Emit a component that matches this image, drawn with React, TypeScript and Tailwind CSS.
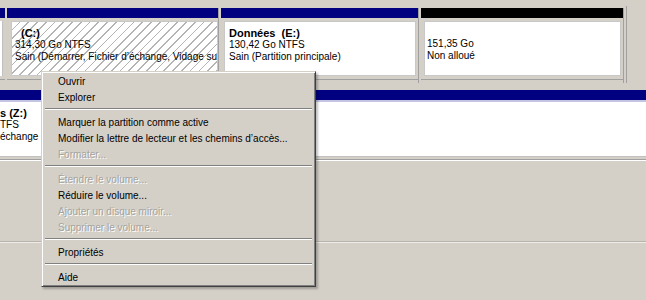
import React from "react";

const hatch =
  "bg-[repeating-linear-gradient(135deg,#ffffff_0px,#ffffff_5px,#b4b4b4_5px,#b4b4b4_6.2px)]";

function MenuItem({ label, disabled }: { label: string; disabled?: boolean }) {
  return (
    <div
      className={
        "h-[16px] flex items-center pl-[15px] whitespace-nowrap " +
        (disabled ? "text-[#a5a39c] [text-shadow:1px_1px_0_#ffffff]" : "text-black")
      }
    >
      {label}
    </div>
  );
}

function Sep() {
  return (
    <div className="h-[9px] pt-[3px] px-[2px]">
      <div className="h-[2px] border-t border-t-[#808080] border-b border-b-white" />
    </div>
  );
}

export default function App() {
  return (
    <div className="relative w-[646px] h-[300px] overflow-hidden bg-[#d4d0c8] font-['Liberation_Sans',Arial,sans-serif] text-[10px] text-black">
      {/* Row 1 */}
      <div className="pt-[8px] flex">
        {/* left stub */}
        <div className="w-[5px] flex flex-col">
          <div className="h-[10px] bg-[#000080]" />
          <div className="h-[62px] pt-[3px] pb-[3px] pr-[2px] border-b border-b-[#a0a0a0]">
            <div className="h-full bg-white border-r border-r-[#c0c0c0]" />
          </div>
        </div>
        <div className="w-[2px]" />
        {/* C: */}
        <div className="w-[212px] flex flex-col border-r border-r-[#a0a0a0]">
          <div className="h-[10px] bg-[#000080]" />
          <div className="h-[62px] pt-[3px] pb-[3px] pl-[4px] pr-[0px] border-b border-b-[#a0a0a0]">
            <div className={"h-full overflow-hidden pl-[3px] pt-[5px] leading-[12px] whitespace-nowrap border border-[#c8c8c8] " + hatch}>
              <div className="font-bold text-[11px] pl-[6px]">(C:)</div>
              <div>314,30 Go NTFS</div>
              <div>Sain (Démarrer, Fichier d’échange, Vidage su</div>
            </div>
          </div>
        </div>
        <div className="w-[2px]" />
        {/* E: */}
        <div className="w-[198px] flex flex-col border-r border-r-[#a0a0a0]">
          <div className="h-[10px] bg-[#000080]" />
          <div className="h-[62px] pt-[3px] pb-[3px] pl-[3px] pr-[2px] border-b border-b-[#a0a0a0]">
            <div className="h-full overflow-hidden bg-white pl-[4px] pt-[5px] leading-[12px] whitespace-nowrap border border-[#c8c8c8]">
              <div className="font-bold text-[11px]">Données&nbsp; (E:)</div>
              <div>130,42 Go NTFS</div>
              <div>Sain (Partition principale)</div>
            </div>
          </div>
        </div>
        <div className="w-[2px]" />
        {/* Unallocated */}
        <div className="w-[203px] flex flex-col border-r border-r-[#a0a0a0]">
          <div className="h-[10px] bg-black" />
          <div className="h-[62px] pt-[3px] pb-[3px] pl-[3px] pr-[2px] border-b border-b-[#a0a0a0]">
            <div className="h-full overflow-hidden bg-white pl-[2px] pt-[16px] leading-[12px] whitespace-nowrap border border-[#c8c8c8]">
              <div>151,35 Go</div>
              <div>Non alloué</div>
            </div>
          </div>
        </div>
        <div className="w-[3px] mt-[-2px] h-[77px] border-r border-r-[#a0a0a0]" />
      </div>

      {/* Row 2 */}
      <div className="mt-[7px] flex flex-col">
        <div className="h-[10px] bg-[#000080]" />
        <div className="h-[2px] bg-[#c4c4e4]" />
        <div className="h-[55px] bg-white pt-[5px] leading-[12px] whitespace-nowrap border-b border-b-[#c0c0c0]">
          <div className="w-[40px] overflow-hidden">
            <div className="font-bold text-[11px]">s&nbsp;(Z:)</div>
            <div>TFS</div>
            <div>échange</div>
          </div>
        </div>
        <div className="h-[2px] bg-[#d4d0c8]" />
        <div className="h-[1px] bg-[#a0a0a0]" />
        <div className="h-[1px] bg-white" />
      </div>

      {/* lower separator line */}
      <div className="mt-[80px] h-[1px] bg-[#b8b4ac]" />
      <div className="h-[1px] bg-[#eeece8]" />

      {/* Context menu */}
      <div className="absolute left-[41px] top-[71px] w-[275px] bg-[#d4d0c8] border border-t-[#d4d0c8] border-l-[#d4d0c8] border-r-[#404040] border-b-[#404040] shadow-[inset_1px_1px_0_#ffffff,inset_-1px_-1px_0_#808080,2px_2px_2px_rgba(0,0,0,0.25)] py-[1px] px-[1px]">
        <MenuItem label="Ouvrir" />
        <MenuItem label="Explorer" />
        <Sep />
        <MenuItem label="Marquer la partition comme active" />
        <MenuItem label="Modifier la lettre de lecteur et les chemins d’accès..." />
        <MenuItem label="Formater..." disabled />
        <Sep />
        <MenuItem label="Étendre le volume..." disabled />
        <MenuItem label="Réduire le volume..." />
        <MenuItem label="Ajouter un disque miroir..." disabled />
        <MenuItem label="Supprimer le volume..." disabled />
        <Sep />
        <MenuItem label="Propriétés" />
        <Sep />
        <MenuItem label="Aide" />
      </div>
    </div>
  );
}
